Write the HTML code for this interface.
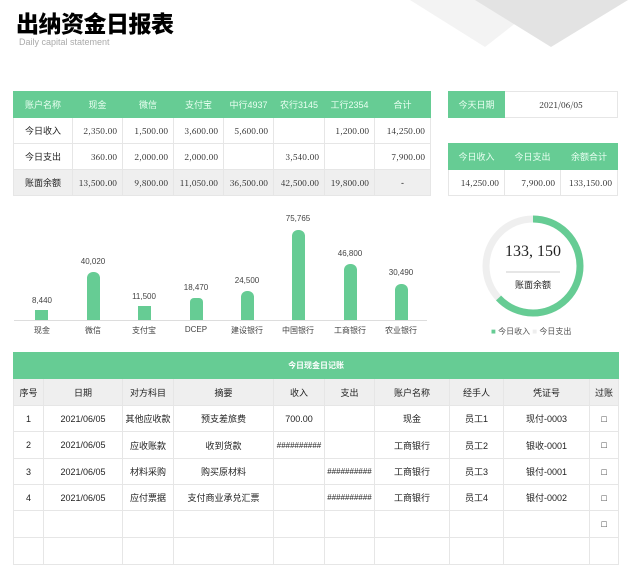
<!DOCTYPE html>
<html><head><meta charset="utf-8"><style>
*{margin:0;padding:0;box-sizing:border-box}
body{width:640px;height:545px;background:#fff;position:relative;overflow:hidden;font-family:"Liberation Sans","Noto Sans CJK SC",sans-serif;color:#222}
.a{position:absolute}
table{border-collapse:collapse;position:absolute;table-layout:fixed}
td{border:1px solid #e6e6e6;text-align:center;font-size:9px;padding:0;white-space:nowrap;overflow:hidden}
.g td,td.g{background:#66cc94;color:#eafff2;border-color:#66cc94}
.n{font-family:"Noto Serif CJK SC","Liberation Serif",serif;font-size:8.5px;text-align:right;padding-right:5px}
.gr td{background:#efefef}
.bl{background:#66cc94;border-radius:6px 6px 0 0;width:13px}
.lab{font-size:8px;color:#444;text-align:center;width:50px}
</style></head><body>
<svg class="a" style="left:0;top:0" width="640" height="60"><polygon points="410,0 545,0 485,47" fill="#f3f3f3"/><polygon points="475,0 628,0 551,47" fill="#e3e3e3"/></svg>
<div class="a" style="left:16px;top:5px;font-size:23px;font-weight:900;color:#000;font-family:'Noto Sans CJK SC',sans-serif;letter-spacing:-0.5px">出纳资金日报表</div>
<div class="a" style="left:19px;top:37px;font-size:9px;color:#aaa">Daily capital statement</div>

<table style="left:13px;top:91px;width:417px">
<colgroup><col style="width:59px"><col style="width:50px"><col style="width:51px"><col style="width:50px"><col style="width:50px"><col style="width:51px"><col style="width:50px"><col style="width:56px"></colgroup>
<tr class="g" style="height:26px"><td>账户名称</td><td>现金</td><td>微信</td><td>支付宝</td><td>中行4937</td><td>农行3145</td><td>工行2354</td><td>合计</td></tr>
<tr style="height:26px"><td>今日收入</td><td class="n">2,350.00</td><td class="n">1,500.00</td><td class="n">3,600.00</td><td class="n">5,600.00</td><td></td><td class="n">1,200.00</td><td class="n">14,250.00</td></tr>
<tr style="height:26px"><td>今日支出</td><td class="n">360.00</td><td class="n">2,000.00</td><td class="n">2,000.00</td><td></td><td class="n">3,540.00</td><td></td><td class="n">7,900.00</td></tr>
<tr class="gr" style="height:26px"><td>账面余额</td><td class="n">13,500.00</td><td class="n">9,800.00</td><td class="n">11,050.00</td><td class="n">36,500.00</td><td class="n">42,500.00</td><td class="n">19,800.00</td><td>-</td></tr>
</table>

<table style="left:448px;top:91px;width:169px">
<colgroup><col style="width:56px"><col style="width:113px"></colgroup>
<tr style="height:26px"><td class="g">今天日期</td><td style="font-family:'Noto Serif CJK SC',serif;font-size:8.5px">2021/06/05</td></tr></table>
<table style="left:448px;top:143px;width:169px">
<colgroup><col style="width:56px"><col style="width:56px"><col style="width:57px"></colgroup>
<tr class="g" style="height:26px"><td>今日收入</td><td>今日支出</td><td>余额合计</td></tr>
<tr style="height:26px"><td class="n">14,250.00</td><td class="n">7,900.00</td><td class="n">133,150.00</td></tr></table>

<div class="a" style="left:14px;top:320px;width:413px;height:1px;background:#ddd"></div>
<div class="a bl" style="left:35px;top:310px;height:10px;border-radius:0"></div>
<div class="a bl" style="left:87px;top:272px;height:48px"></div>
<div class="a bl" style="left:138px;top:306px;height:14px;border-radius:0"></div>
<div class="a bl" style="left:190px;top:298px;height:22px;border-radius:4px 4px 0 0"></div>
<div class="a bl" style="left:241px;top:291px;height:29px"></div>
<div class="a bl" style="left:292px;top:230px;height:90px"></div>
<div class="a bl" style="left:344px;top:264px;height:56px"></div>
<div class="a bl" style="left:395px;top:284px;height:36px"></div>
<div class="a lab" style="left:17px;top:296px">8,440</div>
<div class="a lab" style="left:68px;top:257px">40,020</div>
<div class="a lab" style="left:119px;top:292px">11,500</div>
<div class="a lab" style="left:171px;top:283px">18,470</div>
<div class="a lab" style="left:222px;top:276px">24,500</div>
<div class="a lab" style="left:273px;top:214px">75,765</div>
<div class="a lab" style="left:325px;top:249px">46,800</div>
<div class="a lab" style="left:376px;top:268px">30,490</div>
<div class="a lab" style="left:17px;top:325px">现金</div>
<div class="a lab" style="left:68px;top:325px">微信</div>
<div class="a lab" style="left:119px;top:325px">支付宝</div>
<div class="a lab" style="left:171px;top:325px">DCEP</div>
<div class="a lab" style="left:222px;top:325px">建设银行</div>
<div class="a lab" style="left:273px;top:325px">中国银行</div>
<div class="a lab" style="left:325px;top:325px">工商银行</div>
<div class="a lab" style="left:376px;top:325px">农业银行</div>

<svg class="a" style="left:473px;top:206px" width="120" height="120"><circle cx="60" cy="60" r="47" fill="none" stroke="#efefef" stroke-width="7"/><circle cx="60" cy="60" r="47" fill="none" stroke="#66cc94" stroke-width="7" stroke-dasharray="186 400" transform="rotate(-90 60 60)"/><line x1="33" y1="66" x2="87" y2="66" stroke="#ccc" stroke-width="1"/></svg>
<div class="a" style="left:483px;top:243px;width:100px;text-align:center;font-family:'Liberation Serif',serif;font-size:16px;color:#222">133, 150</div>
<div class="a" style="left:483px;top:278px;width:100px;text-align:center;font-size:9px">账面余额</div>
<div class="a" style="left:491px;top:326px;font-size:8px;color:#555"><span style="color:#66cc94">■</span> 今日收入 <span style="color:#eee">■</span> 今日支出</div>

<table style="left:13px;top:352px;width:605px">
<colgroup><col style="width:30px"><col style="width:79px"><col style="width:51px"><col style="width:100px"><col style="width:51px"><col style="width:50px"><col style="width:75px"><col style="width:54px"><col style="width:86px"><col style="width:29px"></colgroup>
<tr class="g" style="height:26px"><td colspan="10" style="color:#fff;font-weight:bold;font-size:8px">今日现金日记账</td></tr>
<tr class="gr" style="height:27px"><td>序号</td><td>日期</td><td>对方科目</td><td>摘要</td><td>收入</td><td>支出</td><td>账户名称</td><td>经手人</td><td>凭证号</td><td>过账</td></tr>
<tr style="height:26px"><td>1</td><td>2021/06/05</td><td>其他应收款</td><td>预支差旅费</td><td>700.00</td><td></td><td>现金</td><td>员工1</td><td>现付-0003</td><td>□</td></tr>
<tr style="height:27px"><td>2</td><td>2021/06/05</td><td>应收账款</td><td>收到货款</td><td style="font-size:8px">##########</td><td></td><td>工商银行</td><td>员工2</td><td>银收-0001</td><td>□</td></tr>
<tr style="height:26px"><td>3</td><td>2021/06/05</td><td>材料采购</td><td>购买原材料</td><td></td><td style="font-size:8px">##########</td><td>工商银行</td><td>员工3</td><td>银付-0001</td><td>□</td></tr>
<tr style="height:26px"><td>4</td><td>2021/06/05</td><td>应付票据</td><td>支付商业承兑汇票</td><td></td><td style="font-size:8px">##########</td><td>工商银行</td><td>员工4</td><td>银付-0002</td><td>□</td></tr>
<tr style="height:27px"><td></td><td></td><td></td><td></td><td></td><td></td><td></td><td></td><td></td><td>□</td></tr>
<tr style="height:27px"><td></td><td></td><td></td><td></td><td></td><td></td><td></td><td></td><td></td><td></td></tr>
</table>
</body></html>
